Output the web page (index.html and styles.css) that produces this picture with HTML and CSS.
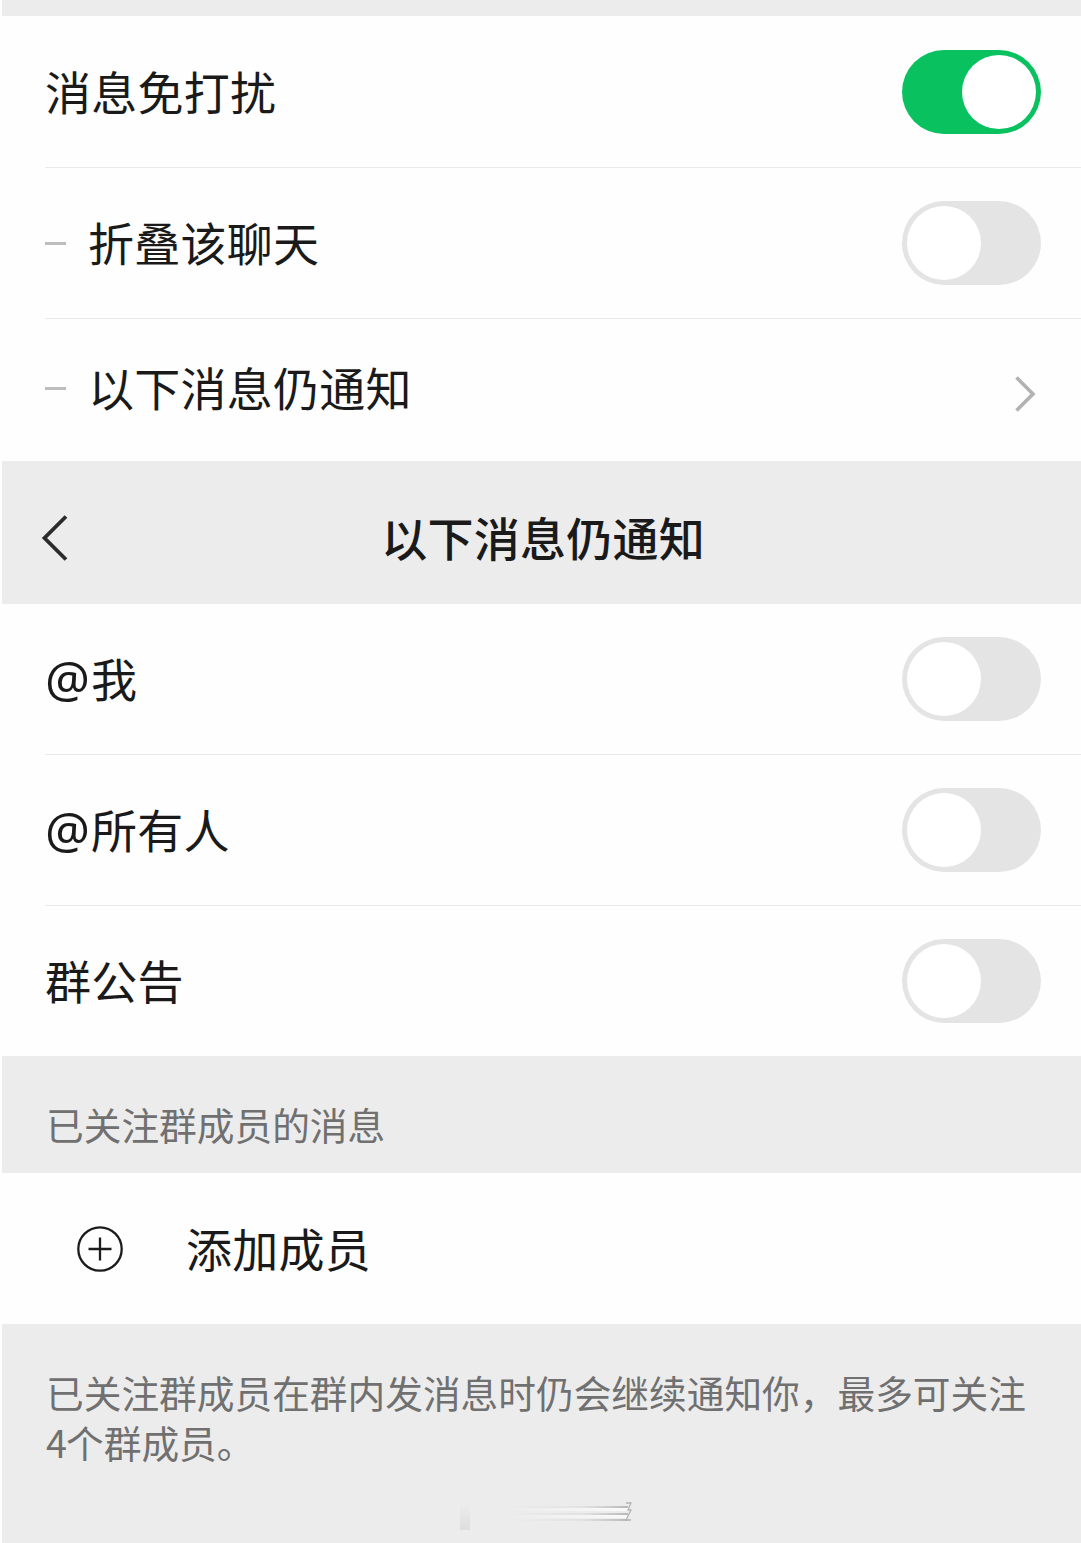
FILE: index.html
```html
<!DOCTYPE html>
<html lang="zh-CN">
<head>
<meta charset="utf-8">
<title>以下消息仍通知</title>
<link rel="stylesheet" href="styles.css">
</head>
<body>
<main class="page">
  <div class="strip"></div>
  <section class="group">
    <div class="row first"><span class="label">消息免打扰</span><span class="switch on"></span></div>
    <div class="row"><span class="dash"></span><span class="label">折叠该聊天</span><span class="switch"></span></div>
    <div class="row link"><span class="dash"></span><span class="label">以下消息仍通知</span>
      <svg class="chevron" width="24" height="38" viewBox="0 0 24 38"><path d="M3.500 2.500 20 19 3.500 35.500" fill="none" stroke="#b2b2b2" stroke-width="3.6"/></svg>
    </div>
  </section>
  <header class="nav">
    <svg class="back" width="30" height="48" viewBox="0 0 30 48"><path d="M27 2.500 5.500 24 27 45.500" fill="none" stroke="#2b2b2b" stroke-width="3.800"/></svg>
    <h1 class="title">以下消息仍通知</h1>
  </header>
  <section class="group">
    <div class="row"><span class="label"><span class="at">@</span>我</span><span class="switch"></span></div>
    <div class="row"><span class="label"><span class="at">@</span>所有人</span><span class="switch"></span></div>
    <div class="row last"><span class="label">群公告</span><span class="switch"></span></div>
  </section>
  <h2 class="caption">已关注群成员的消息</h2>
  <section class="add">
    <svg class="plus" width="48" height="48" viewBox="0 0 48 48"><g fill="none" stroke="#1c1c1c" stroke-width="2.300"><circle cx="24" cy="24" r="21.700"/><path d="M24 12.500V35.500M12.500 24H35.500"/></g></svg>
    <span class="label">添加成员</span>
  </section>
  <footer class="note">
    <p class="hint">已关注群成员在群内发消息时仍会继续通知你，最多可关注<br><span class="num">4</span>个群成员。</p>
    <svg class="smudge" width="190" height="40" viewBox="0 0 190 40">
      <defs><linearGradient id="fade"><stop offset="0" stop-color="#bbb" stop-opacity="0"/><stop offset=".6" stop-color="#bbb" stop-opacity=".2"/><stop offset="1" stop-color="#aaa" stop-opacity=".8"/></linearGradient>
      <linearGradient id="glow"><stop offset="0" stop-color="#fff" stop-opacity="0"/><stop offset="1" stop-color="#fff" stop-opacity=".7"/></linearGradient>
      <linearGradient id="post" x2="0" y2="1"><stop offset="0" stop-color="#d4d4d4" stop-opacity="0"/><stop offset="1" stop-color="#d4d4d4" stop-opacity=".6"/></linearGradient></defs>
      <path d="M10 8h10v26H10z" fill="url(#post)"/>
      <path d="M60 12H178v3H60zM60 19H178v3H60z" fill="url(#glow)"/>
      <path d="M60 10H178v2H60zM60 17H178v2H60zM60 23H178v2H60z" fill="url(#fade)"/>
      <path d="M176 7h5l-3 7h3l-5 10h5" fill="none" stroke="#b4b4b4" stroke-width="1.300"/>
    </svg>
  </footer>
</main>
</body>
</html>
```
FILE: styles.css
```css
* { box-sizing: border-box; }
body {
  margin: 0;
  background: #fefefe;
  color: #1a1a1a;
  font-family: "Noto Sans CJK SC", sans-serif;
}
.page {
  height: 1543px;
  padding-left: 2px;
  display: flex;
  flex-direction: column;
  overflow: hidden;
}
.strip { height: 16px; background: #ececec; }
.group { padding-left: 43px; }
.row {
  height: 151px;
  padding: 0 40px 0 0;
  border-bottom: 1px solid #e9e9e9;
  display: flex;
  align-items: center;
}
.row.first { height: 152px; padding-top: 1px; }
.row.link { height: 142px; padding-bottom: 4px; border-bottom: 0; }
.row.last { height: 150px; border-bottom: 0; }
.label {
  padding-bottom: 4px;
  font-size: 46px;
  letter-spacing: 0.25px;
  line-height: 60px;
  white-space: nowrap;
}
.at {
  display: inline-block;
  width: 46px;
  font-family: "Noto Sans", sans-serif;
  font-size: 50px;
  line-height: 1;
  letter-spacing: 0;
}
.dash { width: 21px; height: 3px; margin-right: 22px; background: #bdbdbd; }
.switch {
  width: 139px;
  height: 84px;
  margin-left: auto;
  padding: 5px;
  border-radius: 42px;
  background: #e4e4e4;
  display: flex;
}
.switch::before {
  content: "";
  width: 74px;
  height: 74px;
  border-radius: 50%;
  background: #fff;
}
.switch.on { background: #0ac160; justify-content: flex-end; }
.chevron { margin: 12px 4px 0 auto; }
.nav {
  height: 143px;
  padding: 0 37px;
  background: #ececec;
  display: grid;
  grid-template-columns: 30px 1fr 30px;
  align-items: center;
}
.back { margin-top: 11px; }
.title {
  margin: 6px 0 0 3px;
  text-align: center;
  font-size: 46px;
  font-weight: 500;
  letter-spacing: 0.25px;
  line-height: 60px;
}
.caption {
  height: 117px;
  margin: 0;
  padding: 43px 44px 0;
  background: #ececec;
  color: #707070;
  font-size: 37.7px;
  font-weight: 400;
  line-height: 50px;
}
.add {
  height: 151px;
  padding-left: 74px;
  display: flex;
  align-items: center;
  gap: 62px;
}
.note {
  flex: 1;
  padding: 43px 0 0 44px;
  background: #ececec;
  color: #707070;
}
.hint {
  margin: 0;
  font-size: 37.7px;
  line-height: 50px;
  white-space: nowrap;
}
.num { display: inline-block; width: 20px; }
.smudge { display: block; margin: 29px 0 0 404px; }
```
